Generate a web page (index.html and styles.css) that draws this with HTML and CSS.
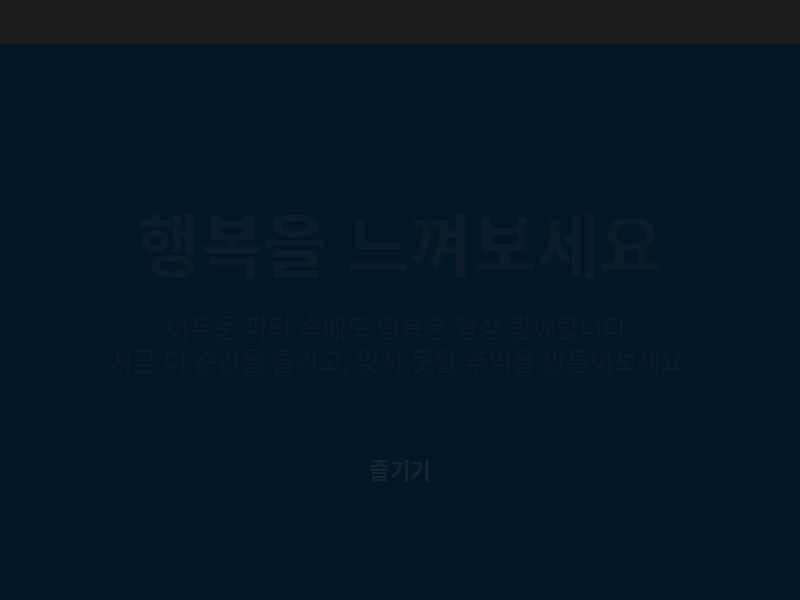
FILE: index.html
```html
<!DOCTYPE html>
<html lang="ko">
<head>
<meta charset="utf-8">
<title>행복</title>
<link rel="stylesheet" href="styles.css">
</head>
<body>
<header class="topbar"></header>
<main class="hero">
  <h1 class="title">행복을 느껴보세요</h1>
  <p class="subtitle">어두운 파티 속에도 행복은 항상 함께합니다.<br>지금 이 순간을 즐기고, 잊지 못할 추억을 만들어보세요.</p>
  <button class="cta">즐기기</button>
</main>
</body>
</html>
```
FILE: styles.css
```css
html, body {
  margin: 0;
  padding: 0;
  height: 100%;
}
body {
  background: #011627;
  font-family: "Noto Sans CJK KR", "Noto Sans", sans-serif;
  overflow: hidden;
}
.topbar {
  height: 44px;
  background: #1b1b1b;
}
.hero {
  display: flex;
  flex-direction: column;
  align-items: center;
  text-align: center;
  padding-top: 160px;
}
.title {
  margin: 0;
  font-size: 68.8px;
  line-height: 76px;
  font-weight: 700;
  color: #0c1b29;
}
.subtitle {
  margin: 30px 0 0;
  font-size: 25.6px;
  line-height: 1.3;
  font-weight: 400;
  color: #0c1a27;
}
.cta {
  margin-top: 66px;
  padding: 12px 24px;
  border: none;
  background: transparent;
  font-family: inherit;
  font-size: 22.4px;
  line-height: 28px;
  font-weight: 700;
  color: #18232e;
}
```
